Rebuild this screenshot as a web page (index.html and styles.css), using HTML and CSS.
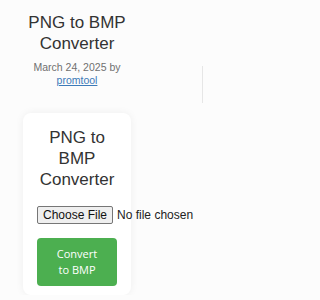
FILE: index.html
```html
<!DOCTYPE html>
<html lang="en">
<head>
<meta charset="utf-8">
<title>PNG to BMP Converter</title>
<link rel="stylesheet" href="styles.css">
</head>
<body>
<div class="page">
  <main class="main">
    <header class="entry-header">
      <h1 class="entry-title">PNG to BMP Converter</h1>
      <p class="meta">March 24, 2025 by <a href="#" class="author">promtool</a></p>
    </header>
    <section class="card">
      <h2 class="card-title">PNG to BMP Converter</h2>
      <input type="file" class="file-input" accept="image/png">
      <button class="convert-btn" type="button">Convert to BMP</button>
    </section>
  </main>
  <aside class="sidebar"></aside>
</div>
</body>
</html>
```
FILE: styles.css
```css
html, body {
  margin: 0;
  padding: 0;
}
body {
  background: #fcfcfc;
  font-family: "Liberation Sans", Arial, sans-serif;
  color: #333;
  overflow: hidden;
}
.page {
  display: flex;
  align-items: flex-start;
}
.main {
  width: 154px;
  flex: none;
  display: flex;
  flex-direction: column;
  align-items: center;
  padding-top: 12px;
}
.entry-header {
  width: 120px;
  text-align: center;
}
.entry-title {
  margin: 0;
  font-size: 17px;
  line-height: 21px;
  font-weight: normal;
  color: #333;
}
.meta {
  margin: 7px 0 0;
  font-size: 10.5px;
  line-height: 13px;
  color: #707070;
}
.author {
  color: #3d7ab8;
  text-decoration: underline;
}
.card {
  margin-top: 26px;
  width: 80px;
  padding: 14px 14px 9px;
  background: #fff;
  border-radius: 8px;
  box-shadow: 0 0 8px rgba(0, 0, 0, 0.06);
}
.card-title {
  margin: 0 0 16px;
  font-size: 17px;
  line-height: 21px;
  font-weight: normal;
  text-align: center;
  color: #333;
}
.file-input {
  display: block;
  width: 160px;
  font-family: "Liberation Sans", Arial, sans-serif;
  font-size: 12px;
  color: #222;
  margin: 0;
}
.file-input::file-selector-button {
  font-family: "Liberation Sans", Arial, sans-serif;
  font-size: 12px;
  background: #efefef;
  border: 1px solid #767676;
  border-radius: 2px;
  padding: 1px 5px;
  margin-right: 4px;
  color: #111;
}
.convert-btn {
  display: block;
  margin-top: 14px;
  width: 80px;
  padding: 8px 18px;
  background: #4caf50;
  color: #fff;
  border: none;
  border-radius: 4px;
  font-family: "Open Sans", sans-serif;
  font-size: 11px;
  line-height: 16px;
  text-align: center;
}
.sidebar {
  flex: none;
  margin-left: 48px;
  margin-top: 66px;
  width: 40px;
  height: 37px;
  border-left: 1px solid #e6e6e6;
}
```
